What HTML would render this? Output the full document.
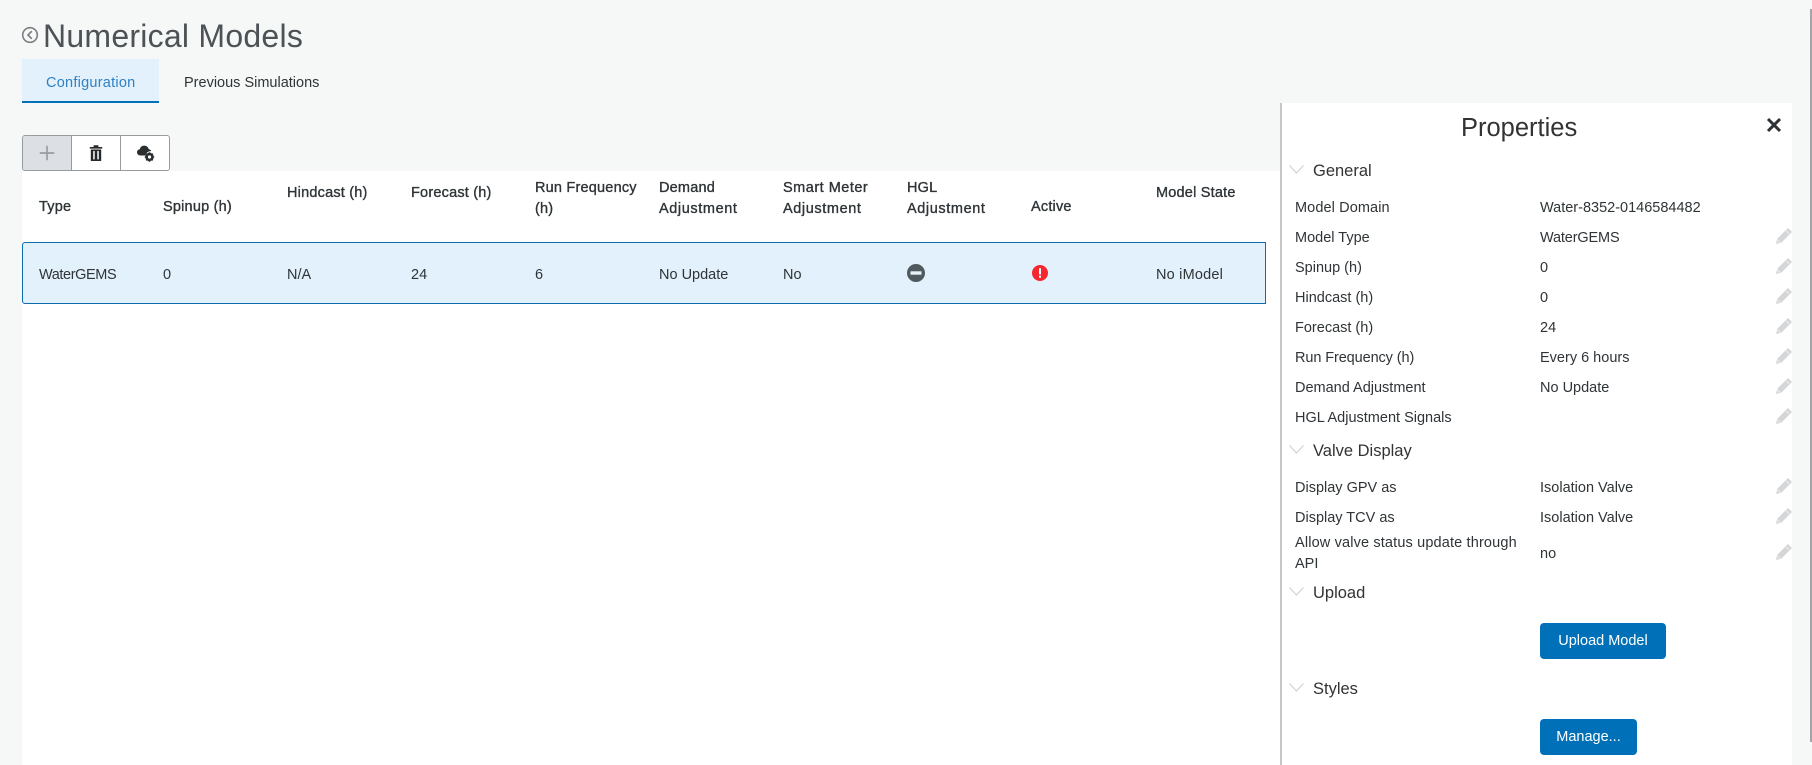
<!DOCTYPE html>
<html lang="en">
<head>
<meta charset="utf-8">
<title>Numerical Models</title>
<style>
html,body{margin:0;padding:0;width:1812px;height:765px;overflow:hidden;background:#f6f8f8;}
body{position:relative;font-family:"Liberation Sans",sans-serif;font-size:14.5px;color:#2f3437;}
.a{position:absolute;}
.t{position:absolute;height:20px;line-height:20px;white-space:nowrap;margin-top:1px;}
.h{-webkit-text-stroke:.35px #2f3437;letter-spacing:.2px;margin-top:0;}
.j{letter-spacing:.6px;}
.s{font-size:16.5px;color:#333;margin-top:0;}
.p{position:absolute;left:1776px;width:16px;height:16px;}
.c{position:absolute;left:1289px;width:15px;height:9px;}
.b{position:absolute;left:1540px;height:36px;line-height:36px;background:#0071b9;color:#fff;border-radius:4px;text-align:center;}
</style>
</head>
<body>
<!-- scrollbar -->
<div class="a" style="left:1810px;top:9px;width:2px;height:733px;background:#a2a4a5"></div>

<!-- header -->
<svg class="a" style="left:21px;top:26px" width="18" height="18" viewBox="0 0 18 18"><circle cx="9" cy="9" r="7.3" fill="none" stroke="#7b7f82" stroke-width="1.600"/><path d="M10.800 5.200 7 9l3.800 3.800" fill="none" stroke="#7b7f82" stroke-width="1.700"/></svg>
<div class="t" style="left:43px;top:15px;height:40px;line-height:40px;font-size:32px;font-weight:300;color:#4d5256;letter-spacing:.25px">Numerical Models</div>

<!-- tabs -->
<div class="a" style="left:22px;top:59px;width:137px;height:42px;background:#e2f1fb;border-bottom:2px solid #0071b9"></div>
<div class="t" style="left:46px;top:72px;color:#2f80c4;letter-spacing:.25px">Configuration</div>
<div class="t" style="left:184px;top:72px">Previous Simulations</div>

<!-- toolbar -->
<div class="a" style="left:22px;top:135px;width:148px;height:36px;box-sizing:border-box;border:1px solid #989b9d;border-radius:3px;background:#fff;overflow:hidden">
  <div class="a" style="left:0;top:0;width:48px;height:34px;background:#dcdfe3;border-right:1px solid #989b9d"></div>
  <div class="a" style="left:97px;top:0;width:1px;height:34px;background:#989b9d"></div>
</div>
<svg class="a" style="left:39px;top:145px" width="16" height="16" viewBox="0 0 16 16"><path d="M8 .8v14.400M.8 8h14.400" stroke="#9a9da0" stroke-width="1.700" fill="none"/></svg>
<svg class="a" style="left:89px;top:144px" width="14" height="18" viewBox="0 0 14 18"><path d="M.8 3h12.400v1.600H.8zM4.600 3V1.200h4.800V3z" fill="#26292b"/><path fill-rule="evenodd" d="M1.800 5.500h10.400V17H1.800zM4.200 7v8.400h1.500V7zM8.300 7v8.400h1.500V7z" fill="#26292b"/></svg>
<svg class="a" style="left:136px;top:144px" width="20" height="19" viewBox="0 0 20 19"><path d="M4.500 11.500C2.300 11.500 1 10.100 1 8.300c0-1.700 1.200-3 2.800-3.100C4.300 3 6 1.600 8.200 1.600c2.300 0 4.100 1.500 4.600 3.700 1.100.1 2.100.8 2.500 1.800-2.900-.3-5.300 1.600-5.700 4.400z" fill="#2c2f31"/><circle cx="13.500" cy="13" r="2.900" fill="none" stroke="#2c2f31" stroke-width="2.600"/><path d="M13.500 8.300v1.500M13.500 16.200v1.500M8.800 13h1.500M16.700 13h1.500M10.200 9.700l1 1M15.800 15.300l1 1M16.800 9.700l-1 1M11.200 15.300l-1 1" stroke="#2c2f31" stroke-width="1.600"/></svg>

<!-- main white -->
<div class="a" style="left:22px;top:171px;width:1258px;height:594px;background:#fff"></div>

<!-- table head -->
<div class="t h" style="left:39px;top:197px">Type</div>
<div class="t h" style="left:163px;top:197px">Spinup (h)</div>
<div class="t h" style="left:287px;top:183px">Hindcast (h)</div>
<div class="t h" style="left:411px;top:183px">Forecast (h)</div>
<div class="t h" style="left:535px;top:178px">Run Frequency</div>
<div class="t h" style="left:535px;top:199px">(h)</div>
<div class="t h" style="left:659px;top:178px">Demand</div>
<div class="t h j" style="left:659px;top:199px">Adjustment</div>
<div class="t h" style="left:783px;top:178px;letter-spacing:.5px">Smart Meter</div>
<div class="t h j" style="left:783px;top:199px">Adjustment</div>
<div class="t h" style="left:907px;top:178px">HGL</div>
<div class="t h j" style="left:907px;top:199px">Adjustment</div>
<div class="t h" style="left:1031px;top:197px">Active</div>
<div class="t h" style="left:1156px;top:183px">Model State</div>

<!-- row -->
<div class="a" style="left:22px;top:242px;width:1244px;height:62px;box-sizing:border-box;background:#e2f1fb;border:1px solid #0b6cb0;border-radius:3px 0 0 3px"></div>
<div class="t" style="left:39px;top:264px;letter-spacing:-.4px">WaterGEMS</div>
<div class="t" style="left:163px;top:264px">0</div>
<div class="t" style="left:287px;top:264px">N/A</div>
<div class="t" style="left:411px;top:264px">24</div>
<div class="t" style="left:535px;top:264px">6</div>
<div class="t" style="left:659px;top:264px">No Update</div>
<div class="t" style="left:783px;top:264px">No</div>
<div class="t" style="left:1156px;top:264px;letter-spacing:.2px">No iModel</div>
<svg class="a" style="left:907px;top:264px" width="18" height="18" viewBox="0 0 18 18"><circle cx="9" cy="9" r="9" fill="#50595d"/><rect x="3.500" y="7.300" width="11" height="3.400" fill="#e6f3fb"/></svg>
<svg class="a" style="left:1032px;top:265px" width="16" height="16" viewBox="0 0 16 16"><circle cx="8" cy="8" r="8" fill="#f5282f"/><rect x="7" y="3.200" width="2" height="6.200" fill="#fff"/><rect x="7" y="10.700" width="2" height="2" fill="#fff"/></svg>

<!-- properties panel -->
<div class="a" style="left:1280px;top:103px;width:512px;height:662px;box-sizing:border-box;background:#fff;border-left:2px solid #c4c7c9"></div>
<div class="t" style="left:1461px;top:112px;height:30px;line-height:30px;font-size:25.500px;color:#333">Properties</div>
<svg class="a" style="left:1766px;top:117px" width="16" height="16" viewBox="0 0 16 16"><path d="M2 2l12 12M14 2 2 14" stroke="#2f3234" stroke-width="3" fill="none"/></svg>

<svg class="c" style="top:165px" viewBox="0 0 15 9"><path d="M.5.500 7.500 8l7-7.500" fill="none" stroke="#cfd2d4" stroke-width="1.200"/></svg>
<div class="t s" style="left:1313px;top:161px">General</div>

<div class="t" style="left:1295px;top:197px;letter-spacing:.1px">Model Domain</div><div class="t" style="left:1540px;top:197px">Water-8352-0146584482</div>
<div class="t" style="left:1295px;top:227px">Model Type</div><div class="t" style="left:1540px;top:227px;letter-spacing:-.15px">WaterGEMS</div>
<div class="t" style="left:1295px;top:257px">Spinup (h)</div><div class="t" style="left:1540px;top:257px">0</div>
<div class="t" style="left:1295px;top:287px">Hindcast (h)</div><div class="t" style="left:1540px;top:287px">0</div>
<div class="t" style="left:1295px;top:317px">Forecast (h)</div><div class="t" style="left:1540px;top:317px">24</div>
<div class="t" style="left:1295px;top:347px;letter-spacing:-.1px">Run Frequency (h)</div><div class="t" style="left:1540px;top:347px">Every 6 hours</div>
<div class="t" style="left:1295px;top:377px">Demand Adjustment</div><div class="t" style="left:1540px;top:377px">No Update</div>
<div class="t" style="left:1295px;top:407px">HGL Adjustment Signals</div>

<svg class="c" style="top:445px" viewBox="0 0 15 9"><path d="M.5.500 7.500 8l7-7.500" fill="none" stroke="#cfd2d4" stroke-width="1.200"/></svg>
<div class="t s" style="left:1313px;top:441px">Valve Display</div>

<div class="t" style="left:1295px;top:477px">Display GPV as</div><div class="t" style="left:1540px;top:477px">Isolation Valve</div>
<div class="t" style="left:1295px;top:507px">Display TCV as</div><div class="t" style="left:1540px;top:507px">Isolation Valve</div>
<div class="t" style="left:1295px;top:532px;letter-spacing:.15px">Allow valve status update through</div>
<div class="t" style="left:1295px;top:553px">API</div><div class="t" style="left:1540px;top:543px">no</div>

<svg class="c" style="top:587px" viewBox="0 0 15 9"><path d="M.5.500 7.500 8l7-7.500" fill="none" stroke="#cfd2d4" stroke-width="1.200"/></svg>
<div class="t s" style="left:1313px;top:583px">Upload</div>
<div class="b" style="top:623px;width:126px">Upload Model</div>

<svg class="c" style="top:683px" viewBox="0 0 15 9"><path d="M.5.500 7.500 8l7-7.500" fill="none" stroke="#cfd2d4" stroke-width="1.200"/></svg>
<div class="t s" style="left:1313px;top:679px">Styles</div>
<div class="b" style="top:719px;width:97px">Manage...</div>

<!-- pencils -->
<svg width="0" height="0" style="position:absolute"><defs><symbol id="pen" viewBox="0 0 16 16"><path d="M12 0 16 4 5 15 1 11z" fill="#d4d6d7"/><path d="M1 11.800 4.200 15 0 16z" fill="#d4d6d7"/><path d="M10.300 3 13 5.700" stroke="#fff" stroke-width=".6"/></symbol></defs></svg>
<svg class="p" style="top:228px"><use href="#pen"/></svg>
<svg class="p" style="top:258px"><use href="#pen"/></svg>
<svg class="p" style="top:288px"><use href="#pen"/></svg>
<svg class="p" style="top:318px"><use href="#pen"/></svg>
<svg class="p" style="top:348px"><use href="#pen"/></svg>
<svg class="p" style="top:378px"><use href="#pen"/></svg>
<svg class="p" style="top:408px"><use href="#pen"/></svg>
<svg class="p" style="top:478px"><use href="#pen"/></svg>
<svg class="p" style="top:508px"><use href="#pen"/></svg>
<svg class="p" style="top:544px"><use href="#pen"/></svg>
</body>
</html>
